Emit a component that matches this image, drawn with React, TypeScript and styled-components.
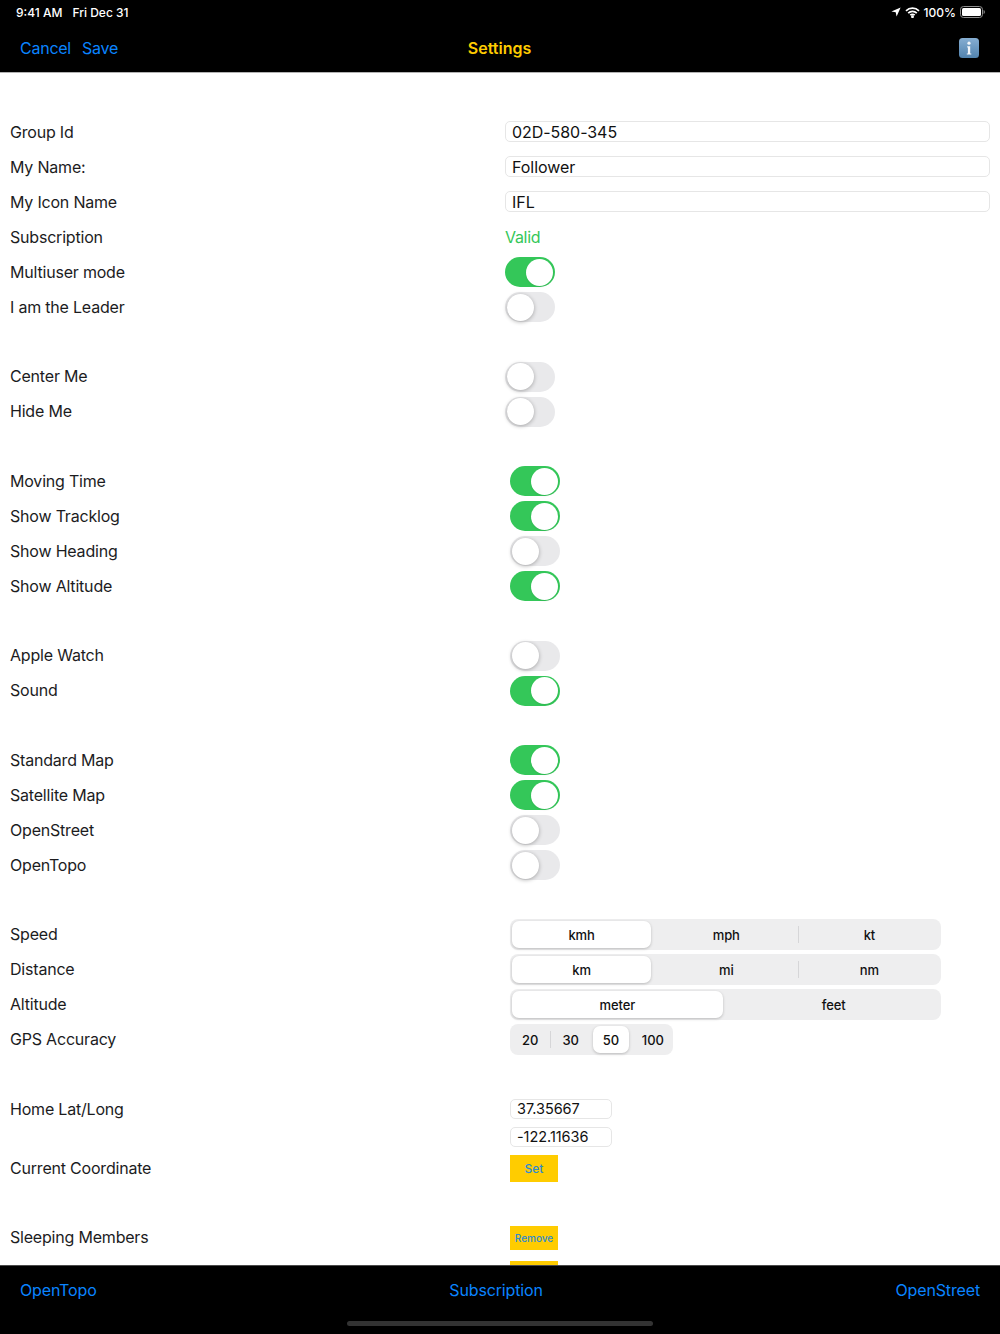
import React from "react";
import styled, { createGlobalStyle } from "styled-components";

const GlobalStyle = createGlobalStyle`
  html, body { margin: 0; padding: 0; background: #fff; }
  body { font-family: Inter, "Noto Sans", "Liberation Sans", sans-serif; }
  * { box-sizing: border-box; }
`;

const Page = styled.div`
  width: 1000px;
  height: 1334px;
  display: flex;
  flex-direction: column;
  overflow: hidden;
`;

const Header = styled.header`
  height: 73px;
  flex: none;
  background: #000;
  border-bottom: 1px solid #b2b2b2;
`;

const StatusBar = styled.div`
  height: 24px;
  padding: 0 15px 0 16px;
  display: flex;
  align-items: center;
  justify-content: space-between;
  color: #fff;
  font-size: 12px;
  font-weight: 500;
`;

const StatusGroup = styled.div<{ $gap: number }>`
  display: flex;
  align-items: center;
  gap: ${({ $gap }) => $gap}px;
`;

const NavBar = styled.nav`
  height: 48px;
  padding: 0 21px 0 20px;
  display: grid;
  grid-template-columns: 1fr auto 1fr;
  align-items: center;
`;

const NavLinks = styled.div`
  display: flex;
  gap: 11px;
`;

const NavLink = styled.span`
  color: #0a84ff;
  font-size: 16px;
  letter-spacing: -0.25px;
`;

const Title = styled.span`
  color: #ffcc00;
  font-size: 16px;
  font-weight: 600;
`;

const NavEnd = styled.div`
  display: flex;
  justify-content: flex-end;
`;

const Content = styled.main`
  flex: 1;
  min-height: 0;
  overflow: hidden;
  padding: 41.5px 10px 0;
`;

const Section = styled.section<{ $gap?: number }>`
  margin-top: ${({ $gap }) => $gap ?? 34.5}px;

  &:first-child {
    margin-top: 0;
  }
`;

const Row = styled.div`
  min-height: 35px;
  display: flex;
  align-items: center;
`;

const TopRow = styled(Row)`
  align-items: flex-start;
`;

const ShortRow = styled(Row)`
  min-height: 27px;
`;

const Label = styled.div`
  width: 495px;
  flex: none;
  color: #1c1c1e;
  font-size: 16px;
  line-height: 27px;
  letter-spacing: -0.2px;
`;

const TopLabel = styled(Label)`
  line-height: 35px;
`;

const Control = styled.div<{ $inset?: number }>`
  flex: 1;
  min-width: 0;
  padding-left: ${({ $inset }) => $inset ?? 0}px;
  display: flex;
`;

const Field = styled.div`
  width: 100%;
  height: 21px;
  margin-bottom: 1px;
  padding-left: 6px;
  border: 1px solid #e6e6e6;
  border-radius: 5px;
  color: #111;
  font-size: 16px;
  line-height: 20px;
  letter-spacing: -0.05px;
`;

const Valid = styled.span`
  color: #34c759;
  font-size: 16px;
  letter-spacing: -0.3px;
`;

const Track = styled.div<{ $on: boolean }>`
  position: relative;
  width: 49.5px;
  height: 30px;
  border-radius: 15px;
  background: ${({ $on }) => ($on ? "#34c759" : "#e9e9eb")};
`;

const Knob = styled.div<{ $on: boolean }>`
  position: absolute;
  top: 1.5px;
  left: ${({ $on }) => ($on ? "21px" : "1.5px")};
  width: 27px;
  height: 27px;
  border-radius: 50%;
  background: #fff;
  box-shadow: ${({ $on }) =>
    $on ? "0 1px 2px rgba(0, 0, 0, 0.08)" : "0 1px 4px rgba(0, 0, 0, 0.3)"};
`;

const Segments = styled.div<{ $width: number }>`
  width: ${({ $width }) => $width}px;
  height: 31px;
  display: flex;
  border-radius: 8px;
  background: #eeeeef;
`;

const Segment = styled.div<{ $active: boolean; $divider: boolean }>`
  position: relative;
  flex: 1 1 0;
  display: flex;
  padding: ${({ $active }) => ($active ? "2px 3.5px 2px 2px" : "2px")};

  &::before {
    content: "";
    display: ${({ $divider }) => ($divider ? "block" : "none")};
    position: absolute;
    left: 0;
    top: 7px;
    bottom: 7px;
    width: 1px;
    background: #d6d6d8;
  }
`;

const SegmentFace = styled.div<{ $active: boolean }>`
  flex: 1;
  display: flex;
  align-items: center;
  justify-content: center;
  border-radius: 7px;
  color: #111;
  font-size: 13px;
  font-weight: 500;
  letter-spacing: -0.1px;
  background: ${({ $active }) => ($active ? "#fff" : "transparent")};
  box-shadow: ${({ $active }) =>
    $active ? "0 1px 3px rgba(0, 0, 0, 0.22)" : "none"};
`;

const Coords = styled.div`
  width: 102px;
  padding: 7px 0 8px;
  display: flex;
  flex-direction: column;
  gap: 8px;
`;

const CoordField = styled(Field)`
  height: 20px;
  margin-bottom: 0;
  padding-left: 6px;
  font-size: 14.5px;
  line-height: 18px;
`;

const YellowButton = styled.div<{ $height: number; $size: number }>`
  width: 48px;
  height: ${({ $height }) => $height}px;
  display: flex;
  align-items: center;
  justify-content: center;
  background: #ffcc00;
  color: #2f8bd0;
  font-size: ${({ $size }) => $size}px;
  font-weight: 500;
`;

const Footer = styled.footer`
  position: relative;
  height: 69px;
  flex: none;
  padding: 14px 20px 0;
  display: flex;
  justify-content: space-between;
  align-items: flex-start;
  background: #000;
  border-top: 1px solid #4a4a4a;
`;

const FooterLink = styled.span`
  color: #0a84ff;
  font-size: 16px;
  line-height: 20px;
  letter-spacing: -0.15px;
`;

const HomeIndicator = styled.div`
  position: absolute;
  left: 347px;
  bottom: 8px;
  width: 306px;
  height: 5px;
  border-radius: 3px;
  background: #333;
`;

const Toggle = ({ on }: { on: boolean }) => (
  <Track $on={on}>
    <Knob $on={on} />
  </Track>
);

const SegmentedControl = ({
  items,
  active,
  width,
}: {
  items: string[];
  active: number;
  width: number;
}) => (
  <Segments $width={width}>
    {items.map((item, i) => (
      <Segment
        key={item}
        $active={i === active}
        $divider={i > 0 && i !== active && i - 1 !== active}
      >
        <SegmentFace $active={i === active}>{item}</SegmentFace>
      </Segment>
    ))}
  </Segments>
);

const ToggleRow = ({
  label,
  on,
  inset,
}: {
  label: string;
  on: boolean;
  inset?: number;
}) => (
  <Row>
    <Label>{label}</Label>
    <Control $inset={inset}>
      <Toggle on={on} />
    </Control>
  </Row>
);

const LocationIcon = () => (
  <svg width="10" height="10" viewBox="0 0 10 10">
    <path d="M9.6.4 5.6 9.6 4.7 5.3.4 4.4z" fill="#fff" />
  </svg>
);

const WifiIcon = () => (
  <svg width="15" height="11" viewBox="0 0 15 11" fill="none" stroke="#fff" strokeWidth="1.7">
    <path d="M1 3.8a9.3 9.3 0 0 1 13 0" />
    <path d="M3.2 6.1a6.1 6.1 0 0 1 8.6 0" />
    <path d="M5.3 8.2a3.1 3.1 0 0 1 4.4 0" />
    <circle cx="7.5" cy="9.7" r=".6" fill="#fff" />
  </svg>
);

const BatteryIcon = () => (
  <svg width="25" height="12" viewBox="0 0 25 12">
    <rect x=".5" y=".5" width="22" height="11" rx="3" fill="none" stroke="#8e8e8e" />
    <rect x="2" y="2" width="19" height="8" rx="1.5" fill="#fff" />
    <path d="M23.6 4v4c.8-.3 1.2-1.1 1.2-2s-.4-1.7-1.2-2z" fill="#8e8e8e" />
  </svg>
);

const InfoIcon = () => (
  <svg width="20" height="20" viewBox="0 0 20 20">
    <defs>
      <linearGradient id="infoFill" x1="0" y1="0" x2="0" y2="1">
        <stop offset="0" stopColor="#86aed2" />
        <stop offset="1" stopColor="#5283ae" />
      </linearGradient>
    </defs>
    <rect width="20" height="20" rx="3.5" fill="url(#infoFill)" />
    <circle cx="10" cy="5.2" r="1.6" fill="#f2f6fa" />
    <path d="M8.2 8.2h3v7.2h1.1v1.2H7.8v-1.2h1.1V9.4h-.7z" fill="#f2f6fa" />
  </svg>
);

export default function App() {
  return (
    <Page>
      <GlobalStyle />
      <Header>
        <StatusBar>
          <StatusGroup $gap={10}>
            <span>9:41 AM</span>
            <span>Fri Dec 31</span>
          </StatusGroup>
          <StatusGroup $gap={4}>
            <LocationIcon />
            <WifiIcon />
            <span>100%</span>
            <BatteryIcon />
          </StatusGroup>
        </StatusBar>
        <NavBar>
          <NavLinks>
            <NavLink>Cancel</NavLink>
            <NavLink>Save</NavLink>
          </NavLinks>
          <Title>Settings</Title>
          <NavEnd>
            <InfoIcon />
          </NavEnd>
        </NavBar>
      </Header>

      <Content>
        <Section>
          <Row>
            <Label>Group Id</Label>
            <Control>
              <Field>02D-580-345</Field>
            </Control>
          </Row>
          <Row>
            <Label>My Name:</Label>
            <Control>
              <Field>Follower</Field>
            </Control>
          </Row>
          <Row>
            <Label>My Icon Name</Label>
            <Control>
              <Field>IFL</Field>
            </Control>
          </Row>
          <Row>
            <Label>Subscription</Label>
            <Control>
              <Valid>Valid</Valid>
            </Control>
          </Row>
          <ToggleRow label="Multiuser mode" on />
          <ToggleRow label="I am the Leader" on={false} />
        </Section>

        <Section>
          <ToggleRow label="Center Me" on={false} />
          <ToggleRow label="Hide Me" on={false} />
        </Section>

        <Section>
          <ToggleRow label="Moving Time" on inset={5} />
          <ToggleRow label="Show Tracklog" on inset={5} />
          <ToggleRow label="Show Heading" on={false} inset={5} />
          <ToggleRow label="Show Altitude" on inset={5} />
        </Section>

        <Section>
          <ToggleRow label="Apple Watch" on={false} inset={5} />
          <ToggleRow label="Sound" on inset={5} />
        </Section>

        <Section>
          <ToggleRow label="Standard Map" on inset={5} />
          <ToggleRow label="Satellite Map" on inset={5} />
          <ToggleRow label="OpenStreet" on={false} inset={5} />
          <ToggleRow label="OpenTopo" on={false} inset={5} />
        </Section>

        <Section>
          <Row>
            <Label>Speed</Label>
            <Control $inset={5}>
              <SegmentedControl items={["kmh", "mph", "kt"]} active={0} width={431} />
            </Control>
          </Row>
          <Row>
            <Label>Distance</Label>
            <Control $inset={5}>
              <SegmentedControl items={["km", "mi", "nm"]} active={0} width={431} />
            </Control>
          </Row>
          <Row>
            <Label>Altitude</Label>
            <Control $inset={5}>
              <SegmentedControl items={["meter", "feet"]} active={0} width={431} />
            </Control>
          </Row>
          <Row>
            <Label>GPS Accuracy</Label>
            <Control $inset={5}>
              <SegmentedControl items={["20", "30", "50", "100"]} active={2} width={163} />
            </Control>
          </Row>
        </Section>

        <Section>
          <TopRow>
            <TopLabel>Home Lat/Long</TopLabel>
            <Control $inset={5}>
              <Coords>
                <CoordField>37.35667</CoordField>
                <CoordField>-122.11636</CoordField>
              </Coords>
            </Control>
          </TopRow>
          <ShortRow>
            <Label>Current Coordinate</Label>
            <Control $inset={5}>
              <YellowButton $height={27} $size={12}>
                Set
              </YellowButton>
            </Control>
          </ShortRow>
        </Section>

        <Section $gap={38.5}>
          <Row>
            <Label>Sleeping Members</Label>
            <Control $inset={5}>
              <YellowButton $height={24} $size={10}>
                Remove
              </YellowButton>
            </Control>
          </Row>
          <Row>
            <Label />
            <Control $inset={5}>
              <YellowButton $height={24} $size={10} />
            </Control>
          </Row>
        </Section>
      </Content>

      <Footer>
        <FooterLink>OpenTopo</FooterLink>
        <FooterLink>Subscription</FooterLink>
        <FooterLink>OpenStreet</FooterLink>
        <HomeIndicator />
      </Footer>
    </Page>
  );
}
